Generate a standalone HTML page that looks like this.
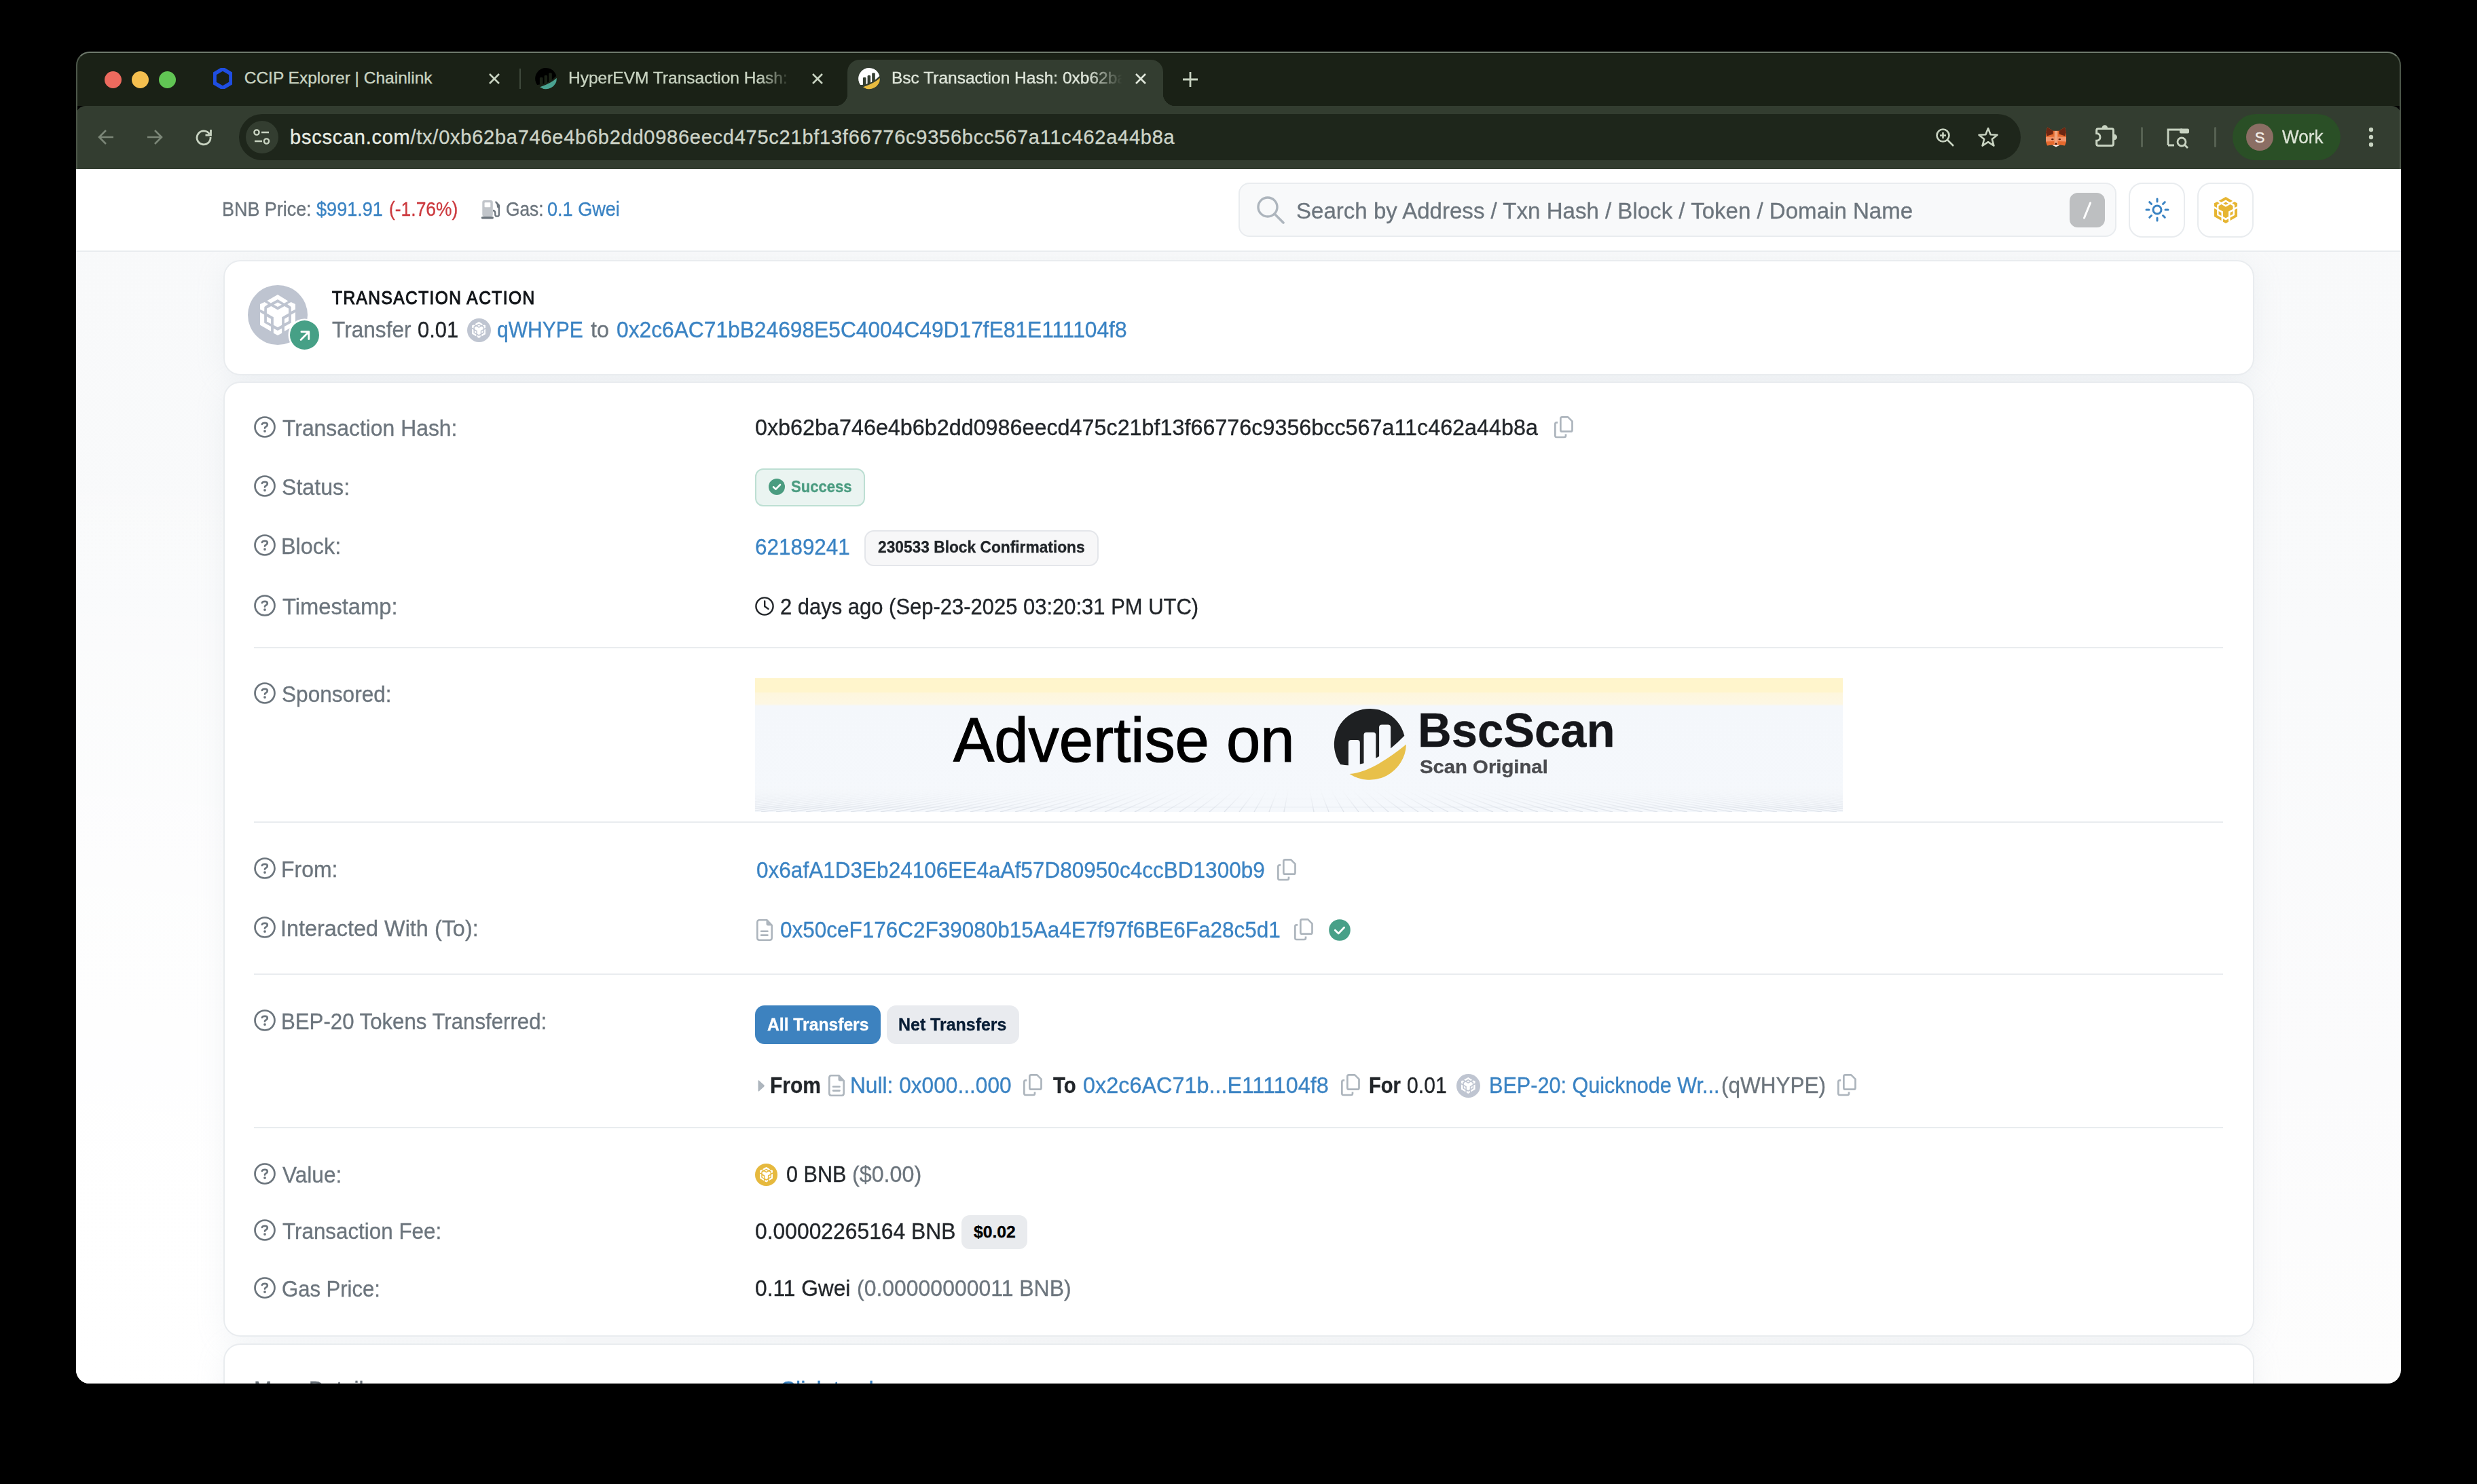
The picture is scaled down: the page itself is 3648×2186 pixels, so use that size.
<!DOCTYPE html>
<html><head><meta charset="utf-8">
<style>
*{box-sizing:border-box;margin:0;padding:0}
html,body{width:3648px;height:2186px;overflow:hidden;background:#000}
body{font-family:"Liberation Sans",sans-serif;position:relative}
.a{position:absolute;white-space:nowrap;line-height:1;-webkit-text-stroke:0.35px currentColor}
#win{position:absolute;left:0;top:0;width:3648px;height:2186px;clip-path:inset(76px 112px 148px 112px round 20px)}
#tabbar{position:absolute;left:112px;top:76px;width:3424px;height:80px;background:#1a2116}
#toolbar{position:absolute;left:112px;top:156px;width:3424px;height:93px;background:#333d30;border-radius:14px 14px 0 0}
#page{position:absolute;left:112px;top:249px;width:3424px;height:1789px;background:linear-gradient(180deg,#f8f9fa 0%,#f9fafb 40%,#fbfbfc 75%,#fdfdfd 100%)}
#hdr{position:absolute;left:112px;top:249px;width:3424px;height:122px;background:#fff;border-bottom:2px solid #e9ecef}
#wborder{position:absolute;left:112px;top:76px;width:3424px;height:173px;border-radius:20px 20px 0 0;border:2px solid #4c5649;border-bottom:none;border-top-color:#6f7a6d;pointer-events:none}
.card{position:absolute;background:#fff;border:2px solid #e9ecef;border-radius:25px}
.shadow{border-radius:25px;box-shadow:0 8px 40px rgba(189,197,209,.18)}
.lbl{color:#6c757d;font-size:34px}
.val{color:#212529;font-size:34px}
.lnk{color:#3a83c3}
.sep{position:absolute;left:374px;width:2900px;height:2px;background:#e9ecef}
.tl{position:absolute;width:25px;height:25px;border-radius:50%}
#pagefade{position:absolute;left:112px;top:371px;width:3424px;height:1667px;background:radial-gradient(ellipse 1700px 1400px at 0 100%,#fff 0%,rgba(255,255,255,.85) 35%,rgba(255,255,255,0) 100%)}
</style></head><body>
<div id="win">
<div id="tabbar"></div>
<div id="toolbar"></div>
<!-- traffic lights -->
  <div class="tl" style="left:154px;top:105px;background:#ec6a5e"></div>
  <div class="tl" style="left:194px;top:105px;background:#f4bf4f"></div>
  <div class="tl" style="left:234px;top:105px;background:#61c554"></div>
  <!-- tab1 -->
  <svg class="a" style="left:314px;top:100px" width="28" height="31" viewBox="0 0 28 31"><path d="M14 1.5 L26 8.5 V22.5 L14 29.5 L2 22.5 V8.5 Z" fill="none" stroke="#1f4ee2" stroke-width="5.6"/></svg>
    <svg class="a" style="left:719px;top:107px" width="18" height="18" viewBox="0 0 18 18"><path d="M2 2L16 16M16 2L2 16" stroke="#c8d3c1" stroke-width="2.6"/></svg>
  <div class="a" style="left:765px;top:101px;width:2px;height:30px;background:#3f4a3c"></div>
  <!-- tab2 -->
  <svg class="a" style="left:779px;top:95px" width="50" height="45" viewBox="0 0 50 45"><path d="M40.3 17A15.8 15.8 0 1 0 12.1 30Q27.8 29.9 40.3 17Z" fill="#000000"/><g fill="#1a2116"><rect x="15.9" y="19.1" width="4.6" height="14" rx="1.4"/><rect x="22.6" y="16.1" width="4.5" height="14" rx="1.4"/><rect x="29.2" y="12.4" width="4.6" height="14" rx="1.4"/></g><path d="M16.1 33.3A15.8 15.8 0 0 0 40.9 20Q32.1 27.95 16.1 33.3Z" fill="#4aa391"/></svg>
  <div class="a" style="left:837px;top:103px;width:330px;overflow:hidden;font-size:24.5px;color:#c8d3c1;-webkit-mask-image:linear-gradient(90deg,#000 85%,transparent)">HyperEVM Transaction Hash: 0xab</div>
  <svg class="a" style="left:1195px;top:107px" width="18" height="18" viewBox="0 0 18 18"><path d="M2 2L16 16M16 2L2 16" stroke="#c8d3c1" stroke-width="2.6"/></svg>
  <!-- active tab -->
  <div class="a" style="left:1248px;top:88px;width:465px;height:68px;background:#333d30;border-radius:18px 18px 0 0"></div>
  <div class="a" style="left:1230px;top:138px;width:18px;height:18px;background:radial-gradient(circle at 0 0,transparent 18px,#333d30 18.5px)"></div>
  <div class="a" style="left:1713px;top:138px;width:18px;height:18px;background:radial-gradient(circle at 100% 0,transparent 18px,#333d30 18.5px)"></div>
  <svg class="a" style="left:1255px;top:95px" width="50" height="45" viewBox="0 0 50 45"><path d="M40.3 17A15.8 15.8 0 1 0 12.1 30Q27.8 29.9 40.3 17Z" fill="#ffffff"/><g fill="#333d30"><rect x="15.9" y="19.1" width="4.6" height="14" rx="1.4"/><rect x="22.6" y="16.1" width="4.5" height="14" rx="1.4"/><rect x="29.2" y="12.4" width="4.6" height="14" rx="1.4"/></g><path d="M16.1 33.3A15.8 15.8 0 0 0 40.9 20Q32.1 27.95 16.1 33.3Z" fill="#e8bb3f"/></svg>
  <div class="a" style="left:1313px;top:103px;width:340px;overflow:hidden;font-size:24.5px;color:#dfe6da;-webkit-mask-image:linear-gradient(90deg,#000 85%,transparent)">Bsc Transaction Hash: 0xb62ba746</div>
  <svg class="a" style="left:1671px;top:107px" width="18" height="18" viewBox="0 0 18 18"><path d="M2 2L16 16M16 2L2 16" stroke="#dfe6da" stroke-width="2.6"/></svg>
  <svg class="a" style="left:1741px;top:105px" width="24" height="24" viewBox="0 0 24 24"><path d="M12 1V23M1 12H23" stroke="#c8d3c1" stroke-width="2.8"/></svg>
  <!-- toolbar -->
  <svg class="a" style="left:143px;top:190px" width="26" height="24" viewBox="0 0 26 24"><path d="M24 12H3M13 2L3 12L13 22" fill="none" stroke="#7b8677" stroke-width="2.6"/></svg>
  <svg class="a" style="left:215px;top:190px" width="26" height="24" viewBox="0 0 26 24"><path d="M2 12H23M13 2L23 12L13 22" fill="none" stroke="#7b8677" stroke-width="2.6"/></svg>
  <svg class="a" style="left:287px;top:189px" width="26" height="26" viewBox="0 0 26 26"><path d="M21.5 8.5A10 10 0 1 0 23 13" fill="none" stroke="#c8d3c1" stroke-width="2.8"/><path d="M23.5 2V10H15.5" fill="none" stroke="#c8d3c1" stroke-width="2.8"/></svg>
  <div class="a" style="left:352px;top:168px;width:2624px;height:68px;border-radius:34px;background:#1e261b"></div>
  <div class="a" style="left:362px;top:178px;width:48px;height:48px;border-radius:24px;background:#333d30"></div>
  <svg class="a" style="left:372px;top:189px" width="28" height="26" viewBox="0 0 28 26"><circle cx="6" cy="6" r="3.6" fill="none" stroke="#c8d3c1" stroke-width="2.4"/><path d="M13 6H24" stroke="#c8d3c1" stroke-width="2.4"/><circle cx="20.5" cy="19" r="3.6" fill="none" stroke="#c8d3c1" stroke-width="2.4"/><path d="M3 19H14" stroke="#c8d3c1" stroke-width="2.4"/></svg>
  <div class="a" style="left:427px;top:188px;font-size:29px;letter-spacing:0.75px;color:#e6ebe2">bscscan.com<span style="color:#cdd4c8">/tx/0xb62ba746e4b6b2dd0986eecd475c21bf13f66776c9356bcc567a11c462a44b8a</span></div>
  <svg class="a" style="left:2850px;top:188px" width="30" height="30" viewBox="0 0 30 30"><circle cx="11.5" cy="11.5" r="9" fill="none" stroke="#c8d3c1" stroke-width="2.6"/><path d="M18 18L27 27M11.5 7V16M7 11.5H16" stroke="#c8d3c1" stroke-width="2.6"/></svg>
  <svg class="a" style="left:2912px;top:186px" width="32" height="32" viewBox="0 0 32 32"><path d="M16 3L19.6 12.2L29.5 12.7L21.8 19L24.4 28.6L16 23.2L7.6 28.6L10.2 19L2.5 12.7L12.4 12.2Z" fill="none" stroke="#c8d3c1" stroke-width="2.6" stroke-linejoin="round"/></svg>
  <svg class="a" style="left:3005px;top:180px" width="50" height="45" viewBox="0 0 50 45"><polygon points="8,15 10.2,7.5 18.7,12.8 27.5,12.8 36,7.5 38,15 38,29 36,34.5 28.7,33.5 23,36.3 17.3,33.5 10,34.5 8,29" fill="#e66a2e"/><polygon points="10.2,7.5 18.7,12.8 18.7,17.5 9.5,20.5 8,15" fill="#6d2612"/><polygon points="36,7.5 27.5,12.8 27.5,17.5 36.5,20.5 38,15" fill="#6d2612"/><polygon points="8,22 20.5,21.5 20.5,28 8,28.5" fill="#f0936a"/><polygon points="38,22 25.5,21.5 25.5,28 38,28.5" fill="#f0936a"/><polygon points="20.8,13 25.3,13 25.6,32 23,33 20.5,32" fill="#f2a47c"/><ellipse cx="17.8" cy="25.2" rx="1.8" ry="1.1" fill="#5a1f0c"/><ellipse cx="28.3" cy="25.2" rx="1.8" ry="1.1" fill="#5a1f0c"/><circle cx="23" cy="31.8" r="1.4" fill="#3b0f05"/><polygon points="17.3,33.5 23,33.8 28.7,33.5 23,36.5" fill="#f4f4f4"/></svg>
  <svg class="a" style="left:3005px;top:180px" width="120" height="45" viewBox="0 0 120 45"><path d="M85.2 9.5H105Q107.5 9.5 107.5 12V32Q107.5 34.5 105 34.5H85.2Q82.7 34.5 82.7 32V27.2A5.3 5.3 0 0 0 82.7 16.6V12Q82.7 9.5 85.2 9.5Z" fill="none" stroke="#c8d3c1" stroke-width="3"/><path d="M90.5 8.6A4.3 4.3 0 0 1 99.1 8.6Z M108.7 17.7A4.3 4.3 0 0 1 108.7 26.3Z" fill="#c8d3c1"/></svg>
  <div class="a" style="left:3153px;top:187px;width:3px;height:30px;background:#566152;border-radius:2px"></div>
  <svg class="a" style="left:3190px;top:188px" width="36" height="32" viewBox="0 0 36 32"><path d="M3 26V3H24" fill="none" stroke="#c8d3c1" stroke-width="2.8"/><rect x="20" y="1.5" width="14" height="7" rx="2" fill="#c8d3c1"/><path d="M3 26H12" stroke="#c8d3c1" stroke-width="2.8"/><circle cx="23" cy="21" r="6" fill="none" stroke="#c8d3c1" stroke-width="2.8"/><path d="M27.5 25.5L32 30" stroke="#c8d3c1" stroke-width="2.8"/></svg>
  <div class="a" style="left:3261px;top:187px;width:3px;height:30px;background:#566152;border-radius:2px"></div>
  <div class="a" style="left:3288px;top:168px;width:159px;height:68px;border-radius:34px;background:#2a4f26"></div>
  <div class="a" style="left:3308px;top:182px;width:40px;height:40px;border-radius:20px;background:#8b6e64;color:#f4efe9;font-size:22px;text-align:center;line-height:41px">S</div>
    <svg class="a" style="left:3484px;top:186px" width="16" height="32" viewBox="0 0 16 32"><circle cx="8" cy="5" r="3.2" fill="#c8d3c1"/><circle cx="8" cy="16" r="3.2" fill="#c8d3c1"/><circle cx="8" cy="27" r="3.2" fill="#c8d3c1"/></svg>

  <div id="page"></div>
<div id="pagefade"></div>
<div class="a shadow" style="left:329px;top:383px;width:2991px;height:170px"></div>
<div class="a shadow" style="left:329px;top:562px;width:2991px;height:1407px"></div>
<div class="a shadow" style="left:329px;top:1979px;width:2991px;height:300px"></div>
<div id="hdr"></div>
<div class="card" style="left:329px;top:383px;width:2991px;height:170px"></div>
<div class="card" style="left:329px;top:562px;width:2991px;height:1407px"></div>
<div class="card" style="left:329px;top:1979px;width:2991px;height:300px"></div>
<svg class="a" style="left:700px;top:290px" width="50" height="45" viewBox="0 0 50 45"><rect x="10.3" y="5" width="15.5" height="24" rx="3" fill="#c1c5ca"/><rect x="13.6" y="8.2" width="8.7" height="7" rx="0.8" fill="#fff"/><rect x="8.8" y="29.1" width="18.2" height="3.3" rx="1.65" fill="#6c757d"/><path d="M26 20Q29.3 20.2 29.3 24V26.2Q29.3 28.7 32.1 28.7Q34.9 28.7 34.9 26.2V12.5" fill="none" stroke="#6c757d" stroke-width="2.3"/><path d="M29.4 6.8Q30.3 6 31.2 6.8L35.5 11.3Q36.1 12 36.1 13V17.5L33.5 16.5Q31.7 15.8 31.7 13.5V11.4L29.5 8.4Q29 7.5 29.4 6.8Z" fill="#6c757d"/></svg>
<div class="a" style="left:1824px;top:269px;width:1293px;height:80px;border-radius:16px;background:#f8f9fa;border:2px solid #e9ecef"></div>
<svg class="a" style="left:1849px;top:288px" width="44" height="42" viewBox="0 0 44 42"><circle cx="18" cy="17" r="14" fill="none" stroke="#adb5bd" stroke-width="3.4"/><path d="M28 27L41 40" stroke="#adb5bd" stroke-width="3.6" stroke-linecap="round"/></svg>
<div class="a" style="left:3048px;top:284px;width:52px;height:51px;border-radius:12px;background:#bdbfc1"></div>
<svg class="a" style="left:3063px;top:295px" width="22" height="30" viewBox="0 0 22 30"><path d="M15.5 4L6.5 26" stroke="#fff" stroke-width="3" stroke-linecap="round"/></svg>
<div class="a" style="left:3135px;top:269px;width:83px;height:81px;border-radius:20px;background:#fff;border:2px solid #e9ecef"></div>
<svg class="a" style="left:3159px;top:291px" width="36" height="36" viewBox="0 0 36 36"><circle cx="18" cy="18" r="6" fill="none" stroke="#3a83c3" stroke-width="3"/><g stroke="#3a83c3" stroke-width="3" stroke-linecap="round"><path d="M18 2V6M18 30V34M2 18H6M30 18H34M6.7 6.7L9.5 9.5M26.5 26.5L29.3 29.3M6.7 29.3L9.5 26.5M26.5 9.5L29.3 6.7"/></g></svg>
<div class="a" style="left:3236px;top:269px;width:83px;height:81px;border-radius:20px;background:#fff;border:2px solid #e9ecef"></div>
<svg class="a" style="left:3261.3px;top:290.0px" width="34.0" height="39.0" viewBox="85 85 1100 1275" preserveAspectRatio="none"><g fill="#e6b532"><polygon points="635,85 960,285 835,355 635,235 420,350 305,275"/><polygon points="635,330 760,400 635,470 515,400"/><polygon points="85,385 225,320 335,385 220,470 215,610 85,545"/><polygon points="1185,385 1050,320 935,385 1050,470 1055,610 1185,545"/><polygon points="295,520 430,445 635,565 845,445 975,520 975,670 765,790 765,1035 635,1110 505,1035 505,790 295,670"/><polygon points="295,770 425,845 425,1000 295,930"/><polygon points="975,770 845,845 845,990 975,915"/><polygon points="85,640 215,710 215,965 425,1085 425,1230 85,1035"/><polygon points="1185,640 1055,710 1055,965 845,1085 845,1230 1185,1035"/><polygon points="505,1140 635,1210 765,1140 765,1290 635,1360 505,1290"/></g></svg>
<div class="a" style="left:365px;top:420px;width:88px;height:88px;border-radius:50%;background:#bec4d0"></div>
<svg class="a" style="left:383.0px;top:434.0px" width="52.0" height="60.0" viewBox="85 85 1100 1275" preserveAspectRatio="none"><g fill="#ffffff"><polygon points="635,85 960,285 835,355 635,235 420,350 305,275"/><polygon points="635,330 760,400 635,470 515,400"/><polygon points="85,385 225,320 335,385 220,470 215,610 85,545"/><polygon points="1185,385 1050,320 935,385 1050,470 1055,610 1185,545"/><polygon points="295,520 430,445 635,565 845,445 975,520 975,670 765,790 765,1035 635,1110 505,1035 505,790 295,670"/><polygon points="295,770 425,845 425,1000 295,930"/><polygon points="975,770 845,845 845,990 975,915"/><polygon points="85,640 215,710 215,965 425,1085 425,1230 85,1035"/><polygon points="1185,640 1055,710 1055,965 845,1085 845,1230 1185,1035"/><polygon points="505,1140 635,1210 765,1140 765,1290 635,1360 505,1290"/></g></svg>
<div class="a" style="left:427.3px;top:472.3px;width:43px;height:43px;border-radius:50%;background:#46a086;box-shadow:0 0 0 2.5px #fff"></div>
<svg class="a" style="left:436.8px;top:481.8px" width="24" height="24" viewBox="0 0 24 24"><path d="M6.1 18.4L17.8 6.7M6.9 6.7H17.8V17.6" fill="none" stroke="#fff" stroke-width="2.8" stroke-linecap="round" stroke-linejoin="round"/></svg>
<div class="a" style="left:687.5px;top:468.5px;width:35.0px;height:35.0px;border-radius:50%;background:#bfc5d1"></div>
<svg class="a" style="left:694.7px;top:474.0px" width="20.6" height="23.9" viewBox="85 85 1100 1275" preserveAspectRatio="none"><g fill="#ffffff"><polygon points="635,85 960,285 835,355 635,235 420,350 305,275"/><polygon points="635,330 760,400 635,470 515,400"/><polygon points="85,385 225,320 335,385 220,470 215,610 85,545"/><polygon points="1185,385 1050,320 935,385 1050,470 1055,610 1185,545"/><polygon points="295,520 430,445 635,565 845,445 975,520 975,670 765,790 765,1035 635,1110 505,1035 505,790 295,670"/><polygon points="295,770 425,845 425,1000 295,930"/><polygon points="975,770 845,845 845,990 975,915"/><polygon points="85,640 215,710 215,965 425,1085 425,1230 85,1035"/><polygon points="1185,640 1055,710 1055,965 845,1085 845,1230 1185,1035"/><polygon points="505,1140 635,1210 765,1140 765,1290 635,1360 505,1290"/></g></svg>
<svg class="a" style="left:373px;top:612.0px" width="34" height="34" viewBox="0 0 34 34"><circle cx="17" cy="17" r="14.5" fill="none" stroke="#6c757d" stroke-width="2.7"/><path d="M12.9 12.9Q13.6 10.9 17 10.9Q20.8 10.9 20.8 13.7Q20.8 15.5 18.7 16.5Q17 17.3 17 18.6" fill="none" stroke="#6c757d" stroke-width="2.7" stroke-linecap="round" stroke-linejoin="round"/><circle cx="17" cy="23.1" r="1.9" fill="#6c757d"/></svg>
<svg class="a" style="left:373px;top:699.0px" width="34" height="34" viewBox="0 0 34 34"><circle cx="17" cy="17" r="14.5" fill="none" stroke="#6c757d" stroke-width="2.7"/><path d="M12.9 12.9Q13.6 10.9 17 10.9Q20.8 10.9 20.8 13.7Q20.8 15.5 18.7 16.5Q17 17.3 17 18.6" fill="none" stroke="#6c757d" stroke-width="2.7" stroke-linecap="round" stroke-linejoin="round"/><circle cx="17" cy="23.1" r="1.9" fill="#6c757d"/></svg>
<svg class="a" style="left:373px;top:786.0px" width="34" height="34" viewBox="0 0 34 34"><circle cx="17" cy="17" r="14.5" fill="none" stroke="#6c757d" stroke-width="2.7"/><path d="M12.9 12.9Q13.6 10.9 17 10.9Q20.8 10.9 20.8 13.7Q20.8 15.5 18.7 16.5Q17 17.3 17 18.6" fill="none" stroke="#6c757d" stroke-width="2.7" stroke-linecap="round" stroke-linejoin="round"/><circle cx="17" cy="23.1" r="1.9" fill="#6c757d"/></svg>
<svg class="a" style="left:373px;top:875.0px" width="34" height="34" viewBox="0 0 34 34"><circle cx="17" cy="17" r="14.5" fill="none" stroke="#6c757d" stroke-width="2.7"/><path d="M12.9 12.9Q13.6 10.9 17 10.9Q20.8 10.9 20.8 13.7Q20.8 15.5 18.7 16.5Q17 17.3 17 18.6" fill="none" stroke="#6c757d" stroke-width="2.7" stroke-linecap="round" stroke-linejoin="round"/><circle cx="17" cy="23.1" r="1.9" fill="#6c757d"/></svg>
<svg class="a" style="left:373px;top:1004.0px" width="34" height="34" viewBox="0 0 34 34"><circle cx="17" cy="17" r="14.5" fill="none" stroke="#6c757d" stroke-width="2.7"/><path d="M12.9 12.9Q13.6 10.9 17 10.9Q20.8 10.9 20.8 13.7Q20.8 15.5 18.7 16.5Q17 17.3 17 18.6" fill="none" stroke="#6c757d" stroke-width="2.7" stroke-linecap="round" stroke-linejoin="round"/><circle cx="17" cy="23.1" r="1.9" fill="#6c757d"/></svg>
<svg class="a" style="left:373px;top:1262.0px" width="34" height="34" viewBox="0 0 34 34"><circle cx="17" cy="17" r="14.5" fill="none" stroke="#6c757d" stroke-width="2.7"/><path d="M12.9 12.9Q13.6 10.9 17 10.9Q20.8 10.9 20.8 13.7Q20.8 15.5 18.7 16.5Q17 17.3 17 18.6" fill="none" stroke="#6c757d" stroke-width="2.7" stroke-linecap="round" stroke-linejoin="round"/><circle cx="17" cy="23.1" r="1.9" fill="#6c757d"/></svg>
<svg class="a" style="left:373px;top:1349.0px" width="34" height="34" viewBox="0 0 34 34"><circle cx="17" cy="17" r="14.5" fill="none" stroke="#6c757d" stroke-width="2.7"/><path d="M12.9 12.9Q13.6 10.9 17 10.9Q20.8 10.9 20.8 13.7Q20.8 15.5 18.7 16.5Q17 17.3 17 18.6" fill="none" stroke="#6c757d" stroke-width="2.7" stroke-linecap="round" stroke-linejoin="round"/><circle cx="17" cy="23.1" r="1.9" fill="#6c757d"/></svg>
<svg class="a" style="left:373px;top:1486.0px" width="34" height="34" viewBox="0 0 34 34"><circle cx="17" cy="17" r="14.5" fill="none" stroke="#6c757d" stroke-width="2.7"/><path d="M12.9 12.9Q13.6 10.9 17 10.9Q20.8 10.9 20.8 13.7Q20.8 15.5 18.7 16.5Q17 17.3 17 18.6" fill="none" stroke="#6c757d" stroke-width="2.7" stroke-linecap="round" stroke-linejoin="round"/><circle cx="17" cy="23.1" r="1.9" fill="#6c757d"/></svg>
<svg class="a" style="left:373px;top:1712.0px" width="34" height="34" viewBox="0 0 34 34"><circle cx="17" cy="17" r="14.5" fill="none" stroke="#6c757d" stroke-width="2.7"/><path d="M12.9 12.9Q13.6 10.9 17 10.9Q20.8 10.9 20.8 13.7Q20.8 15.5 18.7 16.5Q17 17.3 17 18.6" fill="none" stroke="#6c757d" stroke-width="2.7" stroke-linecap="round" stroke-linejoin="round"/><circle cx="17" cy="23.1" r="1.9" fill="#6c757d"/></svg>
<svg class="a" style="left:373px;top:1795.0px" width="34" height="34" viewBox="0 0 34 34"><circle cx="17" cy="17" r="14.5" fill="none" stroke="#6c757d" stroke-width="2.7"/><path d="M12.9 12.9Q13.6 10.9 17 10.9Q20.8 10.9 20.8 13.7Q20.8 15.5 18.7 16.5Q17 17.3 17 18.6" fill="none" stroke="#6c757d" stroke-width="2.7" stroke-linecap="round" stroke-linejoin="round"/><circle cx="17" cy="23.1" r="1.9" fill="#6c757d"/></svg>
<svg class="a" style="left:373px;top:1880.0px" width="34" height="34" viewBox="0 0 34 34"><circle cx="17" cy="17" r="14.5" fill="none" stroke="#6c757d" stroke-width="2.7"/><path d="M12.9 12.9Q13.6 10.9 17 10.9Q20.8 10.9 20.8 13.7Q20.8 15.5 18.7 16.5Q17 17.3 17 18.6" fill="none" stroke="#6c757d" stroke-width="2.7" stroke-linecap="round" stroke-linejoin="round"/><circle cx="17" cy="23.1" r="1.9" fill="#6c757d"/></svg>
<div class="sep" style="top:953px"></div>
<div class="sep" style="top:1210px"></div>
<div class="sep" style="top:1434px"></div>
<div class="sep" style="top:1660px"></div>
<svg class="a" style="left:2289.0px;top:613.0px" width="29" height="33" viewBox="0 0 29 33"><g fill="none" stroke="#adb5bd" stroke-width="2.7" stroke-linejoin="round"><path d="M11.6 1.35H20.2L26.5 7.6V20.4Q26.5 22.7 24.2 22.7H11.6Q9.35 22.7 9.35 20.4V3.6Q9.35 1.35 11.6 1.35Z"/><path d="M5.2 9.35H3.6Q1.35 9.35 1.35 11.6V28.8Q1.35 31 3.6 31H14.7Q17 31 17 28.8V26.4"/></g></svg>
<div class="a" style="left:1112px;top:690px;width:162px;height:56px;border-radius:12px;background:#eaf4f1;border:2px solid #bddfd3"></div>
<svg class="a" style="left:1132px;top:705px" width="24" height="24" viewBox="0 0 24 24"><circle cx="12" cy="12" r="12" fill="#4a9c80"/><path d="M7 12.3L10.5 15.6L17 9" fill="none" stroke="#fff" stroke-width="2.6" stroke-linecap="round" stroke-linejoin="round"/></svg>
<div class="a" style="left:1273px;top:781px;width:345px;height:53px;border-radius:14px;background:#f7f7f8;border:2px solid #e4e6ea"></div>
<svg class="a" style="left:1112px;top:879.4px" width="28" height="28" viewBox="0 0 28 28"><circle cx="14" cy="14" r="12.6" fill="none" stroke="#212529" stroke-width="2.4"/><path d="M14.2 6.4V14.2L19.6 17.9" fill="none" stroke="#212529" stroke-width="2.4" stroke-linecap="round" stroke-linejoin="round"/></svg>
<div class="a" id="ad" style="left:1112px;top:999px;width:1602px;height:197px;overflow:hidden;background:linear-gradient(180deg,#fff5cc 0px,#fff5cc 20px,#fdf6dd 22px,#fdf7e3 38px,#f4f7fb 41px,#f5f8fc 100%)"><svg width="1602" height="197" viewBox="0 0 1602 197" style="position:absolute;left:0;top:0"><defs><linearGradient id="gfade" x1="0" y1="0" x2="0" y2="1"><stop offset="0" stop-color="#fff" stop-opacity="0"/><stop offset="1" stop-color="#d9dee6" stop-opacity="0.8"/></linearGradient></defs><g stroke="url(#gfade)" stroke-width="1.4" fill="none"><path d="M-174.0 150L-849.0 197"/><path d="M-161.0 150L-827.0 197"/><path d="M-148.0 150L-805.0 197"/><path d="M-135.0 150L-783.0 197"/><path d="M-122.0 150L-761.0 197"/><path d="M-109.0 150L-739.0 197"/><path d="M-96.0 150L-717.0 197"/><path d="M-83.0 150L-695.0 197"/><path d="M-70.0 150L-673.0 197"/><path d="M-57.0 150L-651.0 197"/><path d="M-44.0 150L-629.0 197"/><path d="M-31.0 150L-607.0 197"/><path d="M-18.0 150L-585.0 197"/><path d="M-5.0 150L-563.0 197"/><path d="M8.0 150L-541.0 197"/><path d="M21.0 150L-519.0 197"/><path d="M34.0 150L-497.0 197"/><path d="M47.0 150L-475.0 197"/><path d="M60.0 150L-453.0 197"/><path d="M73.0 150L-431.0 197"/><path d="M86.0 150L-409.0 197"/><path d="M99.0 150L-387.0 197"/><path d="M112.0 150L-365.0 197"/><path d="M125.0 150L-343.0 197"/><path d="M138.0 150L-321.0 197"/><path d="M151.0 150L-299.0 197"/><path d="M164.0 150L-277.0 197"/><path d="M177.0 150L-255.0 197"/><path d="M190.0 150L-233.0 197"/><path d="M203.0 150L-211.0 197"/><path d="M216.0 150L-189.0 197"/><path d="M229.0 150L-167.0 197"/><path d="M242.0 150L-145.0 197"/><path d="M255.0 150L-123.0 197"/><path d="M268.0 150L-101.0 197"/><path d="M281.0 150L-79.0 197"/><path d="M294.0 150L-57.0 197"/><path d="M307.0 150L-35.0 197"/><path d="M320.0 150L-13.0 197"/><path d="M333.0 150L9.0 197"/><path d="M346.0 150L31.0 197"/><path d="M359.0 150L53.0 197"/><path d="M372.0 150L75.0 197"/><path d="M385.0 150L97.0 197"/><path d="M398.0 150L119.0 197"/><path d="M411.0 150L141.0 197"/><path d="M424.0 150L163.0 197"/><path d="M437.0 150L185.0 197"/><path d="M450.0 150L207.0 197"/><path d="M463.0 150L229.0 197"/><path d="M476.0 150L251.0 197"/><path d="M489.0 150L273.0 197"/><path d="M502.0 150L295.0 197"/><path d="M515.0 150L317.0 197"/><path d="M528.0 150L339.0 197"/><path d="M541.0 150L361.0 197"/><path d="M554.0 150L383.0 197"/><path d="M567.0 150L405.0 197"/><path d="M580.0 150L427.0 197"/><path d="M593.0 150L449.0 197"/><path d="M606.0 150L471.0 197"/><path d="M619.0 150L493.0 197"/><path d="M632.0 150L515.0 197"/><path d="M645.0 150L537.0 197"/><path d="M658.0 150L559.0 197"/><path d="M671.0 150L581.0 197"/><path d="M684.0 150L603.0 197"/><path d="M697.0 150L625.0 197"/><path d="M710.0 150L647.0 197"/><path d="M723.0 150L669.0 197"/><path d="M736.0 150L691.0 197"/><path d="M749.0 150L713.0 197"/><path d="M762.0 150L735.0 197"/><path d="M775.0 150L757.0 197"/><path d="M788.0 150L779.0 197"/><path d="M801.0 150L801.0 197"/><path d="M814.0 150L823.0 197"/><path d="M827.0 150L845.0 197"/><path d="M840.0 150L867.0 197"/><path d="M853.0 150L889.0 197"/><path d="M866.0 150L911.0 197"/><path d="M879.0 150L933.0 197"/><path d="M892.0 150L955.0 197"/><path d="M905.0 150L977.0 197"/><path d="M918.0 150L999.0 197"/><path d="M931.0 150L1021.0 197"/><path d="M944.0 150L1043.0 197"/><path d="M957.0 150L1065.0 197"/><path d="M970.0 150L1087.0 197"/><path d="M983.0 150L1109.0 197"/><path d="M996.0 150L1131.0 197"/><path d="M1009.0 150L1153.0 197"/><path d="M1022.0 150L1175.0 197"/><path d="M1035.0 150L1197.0 197"/><path d="M1048.0 150L1219.0 197"/><path d="M1061.0 150L1241.0 197"/><path d="M1074.0 150L1263.0 197"/><path d="M1087.0 150L1285.0 197"/><path d="M1100.0 150L1307.0 197"/><path d="M1113.0 150L1329.0 197"/><path d="M1126.0 150L1351.0 197"/><path d="M1139.0 150L1373.0 197"/><path d="M1152.0 150L1395.0 197"/><path d="M1165.0 150L1417.0 197"/><path d="M1178.0 150L1439.0 197"/><path d="M1191.0 150L1461.0 197"/><path d="M1204.0 150L1483.0 197"/><path d="M1217.0 150L1505.0 197"/><path d="M1230.0 150L1527.0 197"/><path d="M1243.0 150L1549.0 197"/><path d="M1256.0 150L1571.0 197"/><path d="M1269.0 150L1593.0 197"/><path d="M1282.0 150L1615.0 197"/><path d="M1295.0 150L1637.0 197"/><path d="M1308.0 150L1659.0 197"/><path d="M1321.0 150L1681.0 197"/><path d="M1334.0 150L1703.0 197"/><path d="M1347.0 150L1725.0 197"/><path d="M1360.0 150L1747.0 197"/><path d="M1373.0 150L1769.0 197"/><path d="M1386.0 150L1791.0 197"/><path d="M1399.0 150L1813.0 197"/><path d="M1412.0 150L1835.0 197"/><path d="M1425.0 150L1857.0 197"/><path d="M1438.0 150L1879.0 197"/><path d="M1451.0 150L1901.0 197"/><path d="M1464.0 150L1923.0 197"/><path d="M1477.0 150L1945.0 197"/><path d="M1490.0 150L1967.0 197"/><path d="M1503.0 150L1989.0 197"/><path d="M1516.0 150L2011.0 197"/><path d="M1529.0 150L2033.0 197"/><path d="M1542.0 150L2055.0 197"/><path d="M1555.0 150L2077.0 197"/><path d="M1568.0 150L2099.0 197"/><path d="M1581.0 150L2121.0 197"/><path d="M1594.0 150L2143.0 197"/><path d="M1607.0 150L2165.0 197"/><path d="M1620.0 150L2187.0 197"/><path d="M1633.0 150L2209.0 197"/><path d="M1646.0 150L2231.0 197"/><path d="M1659.0 150L2253.0 197"/><path d="M1672.0 150L2275.0 197"/><path d="M1685.0 150L2297.0 197"/><path d="M1698.0 150L2319.0 197"/><path d="M1711.0 150L2341.0 197"/><path d="M1724.0 150L2363.0 197"/><path d="M1737.0 150L2385.0 197"/><path d="M1750.0 150L2407.0 197"/><path d="M1763.0 150L2429.0 197"/><path d="M1776.0 150L2451.0 197"/><path d="M0 165H1602M0 178H1602M0 190H1602" stroke-opacity=".35"/></g></svg></div>
<svg class="a" style="left:1960px;top:1040px" width="120" height="120" viewBox="0 0 120 120"><path d="M108.3 43.7A52.5 52.5 0 1 0 14 86Q58.85 95.15 108.3 43.7Z" fill="#1e2022"/><g fill="#f5f8fc"><path d="M25.9 100V54.1Q25.9 50.1 29.9 50.1H38.8Q42.8 50.1 42.8 54.1V100Z"/><path d="M48.5 100V42.8Q48.5 38.8 52.5 38.8H62.3Q66.3 38.8 66.3 42.8V100Z"/><path d="M71.1 100V31.5Q71.1 27.5 75.1 27.5H84.1Q88.1 27.5 88.1 31.5V100Z"/></g><path d="M27.5 100A54 54 0 0 0 111 56.6Q60.15 97.9 27.5 100Z" fill="#e8c04a"/></svg>
<svg class="a" style="left:1881.0px;top:1265.0px" width="29" height="33" viewBox="0 0 29 33"><g fill="none" stroke="#adb5bd" stroke-width="2.7" stroke-linejoin="round"><path d="M11.6 1.35H20.2L26.5 7.6V20.4Q26.5 22.7 24.2 22.7H11.6Q9.35 22.7 9.35 20.4V3.6Q9.35 1.35 11.6 1.35Z"/><path d="M5.2 9.35H3.6Q1.35 9.35 1.35 11.6V28.8Q1.35 31 3.6 31H14.7Q17 31 17 28.8V26.4"/></g></svg>
<svg class="a" style="left:1114.4px;top:1354.2px" width="24" height="32" viewBox="0 0 24 32"><path d="M4.4 1.3H15.6L22.7 8.9V27.5Q22.7 30.7 19.5 30.7H4.4Q1.3 30.7 1.3 27.5V4.5Q1.3 1.3 4.4 1.3Z" fill="none" stroke="#adb5bd" stroke-width="2.6" stroke-linejoin="round"/><path d="M14.5 1.3V7.1Q14.5 9.6 17 9.6H22.7Z" fill="#adb5bd"/><path d="M7 17.8H16.5M7 23.6H16.5" stroke="#adb5bd" stroke-width="2.6" stroke-linecap="round"/></svg>
<svg class="a" style="left:1906.0px;top:1353.0px" width="29" height="33" viewBox="0 0 29 33"><g fill="none" stroke="#adb5bd" stroke-width="2.7" stroke-linejoin="round"><path d="M11.6 1.35H20.2L26.5 7.6V20.4Q26.5 22.7 24.2 22.7H11.6Q9.35 22.7 9.35 20.4V3.6Q9.35 1.35 11.6 1.35Z"/><path d="M5.2 9.35H3.6Q1.35 9.35 1.35 11.6V28.8Q1.35 31 3.6 31H14.7Q17 31 17 28.8V26.4"/></g></svg>
<svg class="a" style="left:1957px;top:1354px" width="32" height="32" viewBox="0 0 32 32"><circle cx="16" cy="16" r="15.8" fill="#48a088"/><path d="M9.3 16.2L14.2 21.1L22.6 12.2" fill="none" stroke="#fff" stroke-width="2.8" stroke-linecap="round" stroke-linejoin="round"/></svg>
<div class="a" style="left:1112px;top:1481px;width:185px;height:57px;border-radius:14px;background:#3d82bf"></div>
<div class="a" style="left:1306px;top:1481px;width:195px;height:57px;border-radius:14px;background:#e9ebef"></div>
<svg class="a" style="left:1115px;top:1590px" width="12" height="19" viewBox="0 0 12 19"><path d="M1.5 2.5Q1.5 0.6 3 1.8L10.2 8.3Q11.3 9.5 10.2 10.7L3 17.2Q1.5 18.4 1.5 16.5Z" fill="#adb5bd"/></svg>
<svg class="a" style="left:1220.0px;top:1583.0px" width="24" height="32" viewBox="0 0 24 32"><path d="M4.4 1.3H15.6L22.7 8.9V27.5Q22.7 30.7 19.5 30.7H4.4Q1.3 30.7 1.3 27.5V4.5Q1.3 1.3 4.4 1.3Z" fill="none" stroke="#adb5bd" stroke-width="2.6" stroke-linejoin="round"/><path d="M14.5 1.3V7.1Q14.5 9.6 17 9.6H22.7Z" fill="#adb5bd"/><path d="M7 17.8H16.5M7 23.6H16.5" stroke="#adb5bd" stroke-width="2.6" stroke-linecap="round"/></svg>
<svg class="a" style="left:1507.0px;top:1582.0px" width="29" height="33" viewBox="0 0 29 33"><g fill="none" stroke="#adb5bd" stroke-width="2.7" stroke-linejoin="round"><path d="M11.6 1.35H20.2L26.5 7.6V20.4Q26.5 22.7 24.2 22.7H11.6Q9.35 22.7 9.35 20.4V3.6Q9.35 1.35 11.6 1.35Z"/><path d="M5.2 9.35H3.6Q1.35 9.35 1.35 11.6V28.8Q1.35 31 3.6 31H14.7Q17 31 17 28.8V26.4"/></g></svg>
<svg class="a" style="left:1975.0px;top:1582.0px" width="29" height="33" viewBox="0 0 29 33"><g fill="none" stroke="#adb5bd" stroke-width="2.7" stroke-linejoin="round"><path d="M11.6 1.35H20.2L26.5 7.6V20.4Q26.5 22.7 24.2 22.7H11.6Q9.35 22.7 9.35 20.4V3.6Q9.35 1.35 11.6 1.35Z"/><path d="M5.2 9.35H3.6Q1.35 9.35 1.35 11.6V28.8Q1.35 31 3.6 31H14.7Q17 31 17 28.8V26.4"/></g></svg>
<div class="a" style="left:2145.0px;top:1581.5px;width:35.0px;height:35.0px;border-radius:50%;background:#bfc5d1"></div>
<svg class="a" style="left:2152.2px;top:1587.0px" width="20.6" height="23.9" viewBox="85 85 1100 1275" preserveAspectRatio="none"><g fill="#ffffff"><polygon points="635,85 960,285 835,355 635,235 420,350 305,275"/><polygon points="635,330 760,400 635,470 515,400"/><polygon points="85,385 225,320 335,385 220,470 215,610 85,545"/><polygon points="1185,385 1050,320 935,385 1050,470 1055,610 1185,545"/><polygon points="295,520 430,445 635,565 845,445 975,520 975,670 765,790 765,1035 635,1110 505,1035 505,790 295,670"/><polygon points="295,770 425,845 425,1000 295,930"/><polygon points="975,770 845,845 845,990 975,915"/><polygon points="85,640 215,710 215,965 425,1085 425,1230 85,1035"/><polygon points="1185,640 1055,710 1055,965 845,1085 845,1230 1185,1035"/><polygon points="505,1140 635,1210 765,1140 765,1290 635,1360 505,1290"/></g></svg>
<svg class="a" style="left:2706.0px;top:1582.0px" width="29" height="33" viewBox="0 0 29 33"><g fill="none" stroke="#adb5bd" stroke-width="2.7" stroke-linejoin="round"><path d="M11.6 1.35H20.2L26.5 7.6V20.4Q26.5 22.7 24.2 22.7H11.6Q9.35 22.7 9.35 20.4V3.6Q9.35 1.35 11.6 1.35Z"/><path d="M5.2 9.35H3.6Q1.35 9.35 1.35 11.6V28.8Q1.35 31 3.6 31H14.7Q17 31 17 28.8V26.4"/></g></svg>
<div class="a" style="left:1112px;top:1713.9px;width:32.8px;height:32.8px;border-radius:50%;background:#e6b93e"></div>
<svg class="a" style="left:1119.0px;top:1719.0px" width="19.2" height="22.6" viewBox="85 85 1100 1275" preserveAspectRatio="none"><g fill="#ffffff"><polygon points="635,85 960,285 835,355 635,235 420,350 305,275"/><polygon points="635,330 760,400 635,470 515,400"/><polygon points="85,385 225,320 335,385 220,470 215,610 85,545"/><polygon points="1185,385 1050,320 935,385 1050,470 1055,610 1185,545"/><polygon points="295,520 430,445 635,565 845,445 975,520 975,670 765,790 765,1035 635,1110 505,1035 505,790 295,670"/><polygon points="295,770 425,845 425,1000 295,930"/><polygon points="975,770 845,845 845,990 975,915"/><polygon points="85,640 215,710 215,965 425,1085 425,1230 85,1035"/><polygon points="1185,640 1055,710 1055,965 845,1085 845,1230 1185,1035"/><polygon points="505,1140 635,1210 765,1140 765,1290 635,1360 505,1290"/></g></svg>
<div class="a" style="left:1416px;top:1790px;width:96.5px;height:50px;border-radius:12px;background:#e9ebee"></div>
<div class="a" id="t0" style="left:359.70px;top:102.96px;font-size:24.50px;color:#c8d3c1">CCIP Explorer | Chainlink</div>
<div class="a" id="t1" style="left:3361.00px;top:188.10px;font-size:28.00px;color:#dce4d6;transform:scaleX(0.9329);transform-origin:0 0">Work</div>
<div class="a" id="t2" style="left:327.16px;top:293.98px;font-size:29.20px;color:#6c757d;transform:scaleX(0.9219);transform-origin:0 0">BNB Price:</div>
<div class="a" id="t3" style="left:466.00px;top:293.98px;font-size:29.20px;color:#3a83c3;transform:scaleX(0.9283);transform-origin:0 0">$991.91</div>
<div class="a" id="t4" style="left:572.59px;top:293.98px;font-size:29.20px;color:#cc3a3f;transform:scaleX(0.9057);transform-origin:0 0">(-1.76%)</div>
<div class="a" id="t5" style="left:745.00px;top:293.98px;font-size:29.20px;color:#6c757d;transform:scaleX(0.9021);transform-origin:0 0">Gas:</div>
<div class="a" id="t6" style="left:806.27px;top:293.98px;font-size:29.20px;color:#3a83c3;transform:scaleX(0.9273);transform-origin:0 0">0.1 Gwei</div>
<div class="a" id="t7" style="left:1908.53px;top:292.72px;font-size:34.00px;color:#6c757d;transform:scaleX(0.9721);transform-origin:0 0">Search by Address / Txn Hash / Block / Token / Domain Name</div>
<div class="a" id="t8" style="left:489.00px;top:424.64px;font-size:27.60px;color:#111418;transform:scaleX(0.8891);transform-origin:0 0;letter-spacing:1.6px;-webkit-text-stroke:1.1px #111418">TRANSACTION ACTION</div>
<div class="a" id="t9" style="left:489.00px;top:468.64px;font-size:33.50px;color:#6c757d;transform:scaleX(0.9438);transform-origin:0 0">Transfer</div>
<div class="a" id="t10" style="left:615.08px;top:468.64px;font-size:33.50px;color:#212529;transform:scaleX(0.9238);transform-origin:0 0">0.01</div>
<div class="a" id="t11" style="left:732.10px;top:469.14px;font-size:33.50px;color:#3a83c3;transform:scaleX(0.8963);transform-origin:0 0">qWHYPE</div>
<div class="a" id="t12" style="left:869.60px;top:468.64px;font-size:33.50px;color:#6c757d;transform:scaleX(0.9668);transform-origin:0 0">to</div>
<div class="a" id="t13" style="left:908.05px;top:468.64px;font-size:33.50px;color:#3a83c3;transform:scaleX(0.9472);transform-origin:0 0">0x2c6AC71bB24698E5C4004C49D17fE81E111104f8</div>
<div class="a" id="t14" style="left:416.00px;top:612.72px;font-size:34.00px;color:#6c757d;transform:scaleX(0.9372);transform-origin:0 0">Transaction Hash:</div>
<div class="a" id="t15" style="left:415.05px;top:699.72px;font-size:34.00px;color:#6c757d;transform:scaleX(0.9454);transform-origin:0 0">Status:</div>
<div class="a" id="t16" style="left:414.10px;top:786.72px;font-size:34.00px;color:#6c757d;transform:scaleX(0.9519);transform-origin:0 0">Block:</div>
<div class="a" id="t17" style="left:416.00px;top:875.72px;font-size:34.00px;color:#6c757d;transform:scaleX(0.9616);transform-origin:0 0">Timestamp:</div>
<div class="a" id="t18" style="left:415.07px;top:1004.72px;font-size:34.00px;color:#6c757d;transform:scaleX(0.9293);transform-origin:0 0">Sponsored:</div>
<div class="a" id="t19" style="left:414.12px;top:1262.72px;font-size:34.00px;color:#6c757d;transform:scaleX(0.9393);transform-origin:0 0">From:</div>
<div class="a" id="t20" style="left:413.14px;top:1349.72px;font-size:34.00px;color:#6c757d;transform:scaleX(0.9529);transform-origin:0 0">Interacted With (To):</div>
<div class="a" id="t21" style="left:414.17px;top:1486.72px;font-size:34.00px;color:#6c757d;transform:scaleX(0.9172);transform-origin:0 0">BEP-20 Tokens Transferred:</div>
<div class="a" id="t22" style="left:416.00px;top:1712.72px;font-size:34.00px;color:#6c757d;transform:scaleX(0.9296);transform-origin:0 0">Value:</div>
<div class="a" id="t23" style="left:416.00px;top:1795.72px;font-size:34.00px;color:#6c757d;transform:scaleX(0.9224);transform-origin:0 0">Transaction Fee:</div>
<div class="a" id="t24" style="left:415.09px;top:1880.72px;font-size:34.00px;color:#6c757d;transform:scaleX(0.9126);transform-origin:0 0">Gas Price:</div>
<div class="a" id="t25" style="left:1112.05px;top:612.22px;font-size:34.00px;color:#212529;transform:scaleX(0.9503);transform-origin:0 0">0xb62ba746e4b6b2dd0986eecd475c21bf13f66776c9356bcc567a11c462a44b8a</div>
<div class="a" id="t26" style="left:1165.00px;top:705.09px;font-size:24.70px;color:#4a9c80;font-weight:bold;transform:scaleX(0.8948);transform-origin:0 0">Success</div>
<div class="a" id="t27" style="left:1112.08px;top:788.42px;font-size:34.00px;color:#3a83c3;transform:scaleX(0.9239);transform-origin:0 0">62189241</div>
<div class="a" id="t28" style="left:1293.00px;top:794.09px;font-size:24.70px;color:#212529;font-weight:bold;transform:scaleX(0.9214);transform-origin:0 0">230533 Block Confirmations</div>
<div class="a" id="t29" style="left:1149.09px;top:875.62px;font-size:34.00px;color:#212529;transform:scaleX(0.9106);transform-origin:0 0">2 days ago (Sep-23-2025 03:20:31 PM UTC)</div>
<div class="a" id="t30" style="left:1114.07px;top:1264.22px;font-size:34.00px;color:#3a83c3;transform:scaleX(0.9277);transform-origin:0 0">0x6afA1D3Eb24106EE4aAf57D80950c4ccBD1300b9</div>
<div class="a" id="t31" style="left:1149.07px;top:1352.22px;font-size:34.00px;color:#3a83c3;transform:scaleX(0.9258);transform-origin:0 0">0x50ceF176C2F39080b15Aa4E7f97f6BE6Fa28c5d1</div>
<div class="a" id="t32" style="left:1130.00px;top:1495.99px;font-size:26.00px;color:#ffffff;font-weight:bold;transform:scaleX(0.9487);transform-origin:0 0">All Transfers</div>
<div class="a" id="t33" style="left:1323.04px;top:1495.99px;font-size:26.00px;color:#081d35;font-weight:bold;transform:scaleX(0.9592);transform-origin:0 0">Net Transfers</div>
<div class="a" id="t34" style="left:1134.24px;top:1581.22px;font-size:34.00px;color:#212529;font-weight:bold;transform:scaleX(0.8805);transform-origin:0 0">From</div>
<div class="a" id="t35" style="left:1252.14px;top:1581.22px;font-size:34.00px;color:#3a83c3;transform:scaleX(0.9316);transform-origin:0 0">Null: 0x000...000</div>
<div class="a" id="t36" style="left:1551.00px;top:1581.22px;font-size:34.00px;color:#212529;font-weight:bold;transform:scaleX(0.8629);transform-origin:0 0">To</div>
<div class="a" id="t37" style="left:1595.05px;top:1581.22px;font-size:34.00px;color:#3a83c3;transform:scaleX(0.9523);transform-origin:0 0">0x2c6AC71b...E111104f8</div>
<div class="a" id="t38" style="left:2016.29px;top:1581.22px;font-size:34.00px;color:#212529;font-weight:bold;transform:scaleX(0.8565);transform-origin:0 0">For</div>
<div class="a" id="t39" style="left:2072.11px;top:1581.22px;font-size:34.00px;color:#212529;transform:scaleX(0.8870);transform-origin:0 0">0.01</div>
<div class="a" id="t40" style="left:2192.70px;top:1581.22px;font-size:34.00px;color:#3a83c3;transform:scaleX(0.8998);transform-origin:0 0">BEP-20: Quicknode Wr...</div>
<div class="a" id="t41" style="left:2535.15px;top:1581.22px;font-size:34.00px;color:#6c757d;transform:scaleX(0.9269);transform-origin:0 0">(qWHYPE)</div>
<div class="a" id="t42" style="left:1158.10px;top:1712.22px;font-size:34.00px;color:#212529;transform:scaleX(0.8997);transform-origin:0 0">0 BNB</div>
<div class="a" id="t43" style="left:1255.10px;top:1712.22px;font-size:34.00px;color:#6c757d;transform:scaleX(0.9482);transform-origin:0 0">($0.00)</div>
<div class="a" id="t44" style="left:1112.06px;top:1795.72px;font-size:34.00px;color:#212529;transform:scaleX(0.9360);transform-origin:0 0">0.00002265164 BNB</div>
<div class="a" id="t45" style="left:1434.00px;top:1802.59px;font-size:24.70px;color:#000000;font-weight:bold">$0.02</div>
<div class="a" id="t46" style="left:1112.07px;top:1880.22px;font-size:34.00px;color:#212529;transform:scaleX(0.9324);transform-origin:0 0">0.11 Gwei</div>
<div class="a" id="t47" style="left:1261.62px;top:1880.22px;font-size:34.00px;color:#6c757d;transform:scaleX(0.9398);transform-origin:0 0">(0.00000000011 BNB)</div>
<div class="a" id="t48" style="left:1404.00px;top:1044.28px;font-size:93.00px;color:#000000;transform:scaleX(0.9722);transform-origin:0 0;-webkit-text-stroke:1.2px #000">Advertise on</div>
<div class="a" id="t49" style="left:2088.07px;top:1040.74px;font-size:70.00px;color:#15161a;font-weight:bold;transform:scaleX(0.9828);transform-origin:0 0">BscScan</div>
<div class="a" id="t50" style="left:2091.00px;top:1115.64px;font-size:27.60px;color:#4a4b4f;font-weight:bold;transform:scaleX(1.0612);transform-origin:0 0">Scan Original</div>
<div class="a" id="t51" style="left:374.14px;top:2028.72px;font-size:34.00px;color:#6c757d;transform:scaleX(0.9294);transform-origin:0 0">More Details:</div>
<div class="a" id="t52" style="left:1121.05px;top:2028.72px;font-size:34.00px;color:#3a83c3;transform:scaleX(0.9473);transform-origin:0 0">+ Click to show more</div>
</div>
<div id="wborder"></div>
</body></html>
